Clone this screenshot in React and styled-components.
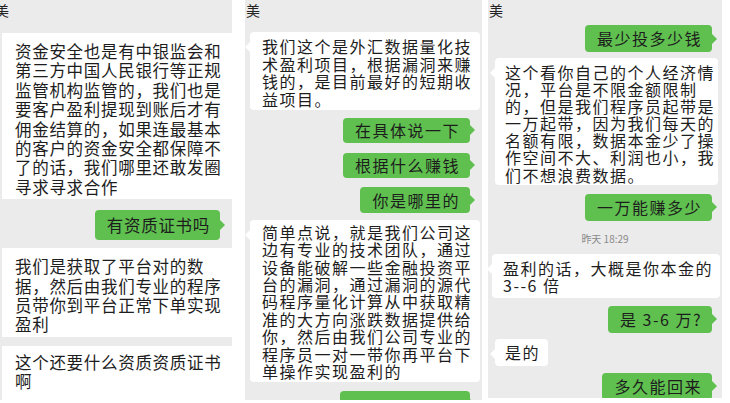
import React from "react";
import styled, { createGlobalStyle, css } from "styled-components";

const GlobalStyle = createGlobalStyle`
  html, body {
    margin: 0;
    padding: 0;
    background: #fff;
  }
  body {
    font-family: "Noto Sans CJK SC", "Noto Sans", sans-serif;
    color: #1d1d1d;
  }
`;

const GREEN = "#5fc04f";
const GRAY = "#ebebeb";

const panels = [
  {
    key: "p1",
    ml: 0,
    width: 232,
    height: 400,
    headerH: 33,
    nameShift: -5,
    wide: true,
    items: [
      {
        type: "in",
        mt: 0,
        ml: 2,
        pad: "9px 0 2px 13px",
        lh: 19.4,
        lines: [
          "资金安全也是有中银监会和",
          "第三方中国人民银行等正规",
          "监管机构监管的，我们也是",
          "要客户盈利提现到账后才有",
          "佣金结算的，如果连最基本",
          "的客户的资金安全都保障不",
          "了的话，我们哪里还敢发圈",
          "寻求寻求合作",
        ],
      },
      { type: "out", mt: 11, h: 30, mr: 12, text: "有资质证书吗" },
      {
        type: "in",
        mt: 8,
        ml: 2,
        pad: "9px 0 2px 13px",
        lh: 19.4,
        lines: [
          "我们是获取了平台对的数",
          "据，然后由我们专业的程序",
          "员带你到平台正常下单实现",
          "盈利",
        ],
      },
      {
        type: "in",
        mt: 9,
        ml: 2,
        pad: "7px 0 8px 13px",
        lh: 19.4,
        lines: ["这个还要什么资质资质证书", "啊"],
      },
    ],
  },
  {
    key: "p2",
    ml: 13,
    width: 237,
    height: 400,
    headerH: 32,
    nameShift: 1,
    items: [
      {
        type: "in",
        mt: 0,
        ml: 5,
        w: 230,
        pad: "6px 0 1px 12px",
        lh: 17.7,
        lines: [
          "我们这个是外汇数据量化技",
          "术盈利项目，根据漏洞来赚",
          "钱的，是目前最好的短期收",
          "益项目。",
        ],
      },
      { type: "out", mt: 8, h: 25, mr: 12, text: "在具体说一下" },
      { type: "out", mt: 10, h: 25, mr: 12, text: "根据什么赚钱" },
      { type: "out", mt: 9, h: 26, mr: 12, text: "你是哪里的" },
      {
        type: "in",
        mt: 7,
        ml: 5,
        w: 230,
        pad: "4px 0 2px 12px",
        lh: 17.4,
        lines: [
          "简单点说，就是我们公司这",
          "边有专业的技术团队，通过",
          "设备能破解一些金融投资平",
          "台的漏洞，通过漏洞的源代",
          "码程序量化计算从中获取精",
          "准的大方向涨跌数据提供给",
          "你，然后由我们公司专业的",
          "程序员一对一带你再平台下",
          "单操作实现盈利的",
        ],
      },
      // only the top edge of this bubble is visible in the crop
      { type: "out", mt: 9, h: 25, mr: 12, w: 130, text: "" },
    ],
  },
  {
    key: "p3",
    ml: 6,
    width: 234,
    height: 398,
    headerH: 25,
    nameShift: 1,
    items: [
      { type: "out", mt: 0, h: 27, mr: 10, text: "最少投多少钱" },
      {
        type: "in",
        mt: 6,
        ml: 7,
        w: 223,
        pad: "6px 0 1px 10px",
        lh: 17.1,
        lines: [
          "这个看你自己的个人经济情",
          "况，平台是不限金额限制",
          "的，但是我们程序员起带是",
          "一万起带，因为我们每天的",
          "名额有限，数据本金少了操",
          "作空间不大、利润也小，我",
          "们不想浪费数据。",
        ],
      },
      { type: "out", mt: 9, h: 27, mr: 10, text: "一万能赚多少" },
      { type: "time", mt: 12, text: "昨天 18:29" },
      {
        type: "in",
        mt: 9,
        ml: 4,
        w: 228,
        pad: "6px 0 4px 11px",
        lh: 17,
        lines: ["盈利的话，大概是你本金的", "3--6 倍"],
      },
      { type: "out", mt: 8, h: 27, mr: 10, text: "是 3-6 万?" },
      { type: "in", mt: 6, ml: 7, h: 27, pad: "0 8px 0 10px", lh: 27, lines: ["是的"] },
      { type: "out", mt: 7, h: 27, mr: 10, text: "多久能回来" },
    ],
  },
];

export default function App() {
  return (
    <>
      <GlobalStyle />
      <Page>
        {panels.map((p) => (
          <Panel key={p.key} $ml={p.ml} $w={p.width} $h={p.height}>
            <Header $h={p.headerH} $shift={p.nameShift}>
              美
            </Header>
            {p.items.map((it, i) => {
              if (it.type === "time") {
                return (
                  <Stamp key={i} $mt={it.mt}>
                    {it.text}
                  </Stamp>
                );
              }
              if (it.type === "out") {
                return (
                  <Outgoing
                    key={i}
                    $mt={it.mt}
                    $mr={it.mr}
                    $h={it.h}
                    $w={it.w}
                    $wide={p.wide}
                  >
                    {it.text}
                  </Outgoing>
                );
              }
              return (
                <Incoming
                  key={i}
                  $mt={it.mt}
                  $ml={it.ml}
                  $w={it.w}
                  $h={it.h}
                  $pad={it.pad}
                  $lh={it.lh}
                  $wide={p.wide}
                >
                  {it.lines.map((l, j) => (
                    <Line key={j}>{l}</Line>
                  ))}
                </Incoming>
              );
            })}
          </Panel>
        ))}
      </Page>
    </>
  );
}

const textStyle = css`
  font-size: ${({ $wide }) => ($wide ? 16.5 : 16)}px;
  letter-spacing: ${({ $wide }) => ($wide ? 0.7 : 1.5)}px;
  color: #1d1d1d;
  white-space: nowrap;
`;

const Page = styled.div`
  display: flex;
  align-items: flex-start;
  width: 730px;
  height: 403px;
  overflow: hidden;
  background: #fff;
`;

const Panel = styled.div`
  flex-shrink: 0;
  display: flex;
  flex-direction: column;
  margin-left: ${({ $ml }) => $ml}px;
  width: ${({ $w }) => $w}px;
  height: ${({ $h }) => $h}px;
  background: ${GRAY};
  overflow: hidden;
`;

const Header = styled.div`
  flex-shrink: 0;
  box-sizing: border-box;
  height: ${({ $h }) => $h}px;
  padding: 1px 0 0 ${({ $shift }) => Math.max($shift, 0)}px;
  text-indent: ${({ $shift }) => Math.min($shift, 0)}px;
  font-size: 14px;
  line-height: 18px;
  color: #222;
`;

const Line = styled.div`
  display: block;
`;

const Incoming = styled.div`
  ${textStyle};
  position: relative;
  flex-shrink: 0;
  box-sizing: border-box;
  align-self: flex-start;
  margin-top: ${({ $mt }) => $mt}px;
  margin-left: ${({ $ml }) => $ml}px;
  width: ${({ $w, $wide }) => ($wide ? "calc(100% - 2px)" : $w ? `${$w}px` : "auto")};
  ${({ $h }) => $h && `height: ${$h}px;`}
  padding: ${({ $pad }) => $pad};
  line-height: ${({ $lh }) => $lh}px;
  background: #fff;
  border-radius: ${({ $wide }) => ($wide ? 0 : 4)}px;

  ${({ $wide }) =>
    !$wide &&
    css`
      &::before {
        content: "";
        position: absolute;
        left: -5px;
        top: 10px;
        border-right: 5px solid #fff;
        border-top: 5px solid transparent;
        border-bottom: 5px solid transparent;
      }
    `}
`;

const Outgoing = styled.div`
  ${textStyle};
  position: relative;
  flex-shrink: 0;
  box-sizing: border-box;
  align-self: flex-end;
  margin-top: ${({ $mt }) => $mt}px;
  margin-right: ${({ $mr }) => $mr}px;
  ${({ $w }) => $w && `width: ${$w}px;`}
  height: ${({ $h }) => $h}px;
  line-height: ${({ $h }) => $h}px;
  padding: 0 10px 0 12px;
  background: ${GREEN};
  border-radius: 4px;

  &::after {
    content: "";
    position: absolute;
    right: -5px;
    top: calc(50% - 5px);
    border-left: 5px solid ${GREEN};
    border-top: 5px solid transparent;
    border-bottom: 5px solid transparent;
  }
`;

const Stamp = styled.div`
  flex-shrink: 0;
  margin-top: ${({ $mt }) => $mt}px;
  height: 12px;
  line-height: 12px;
  font-size: 10px;
  color: #8a8a8a;
  text-align: center;
`;
